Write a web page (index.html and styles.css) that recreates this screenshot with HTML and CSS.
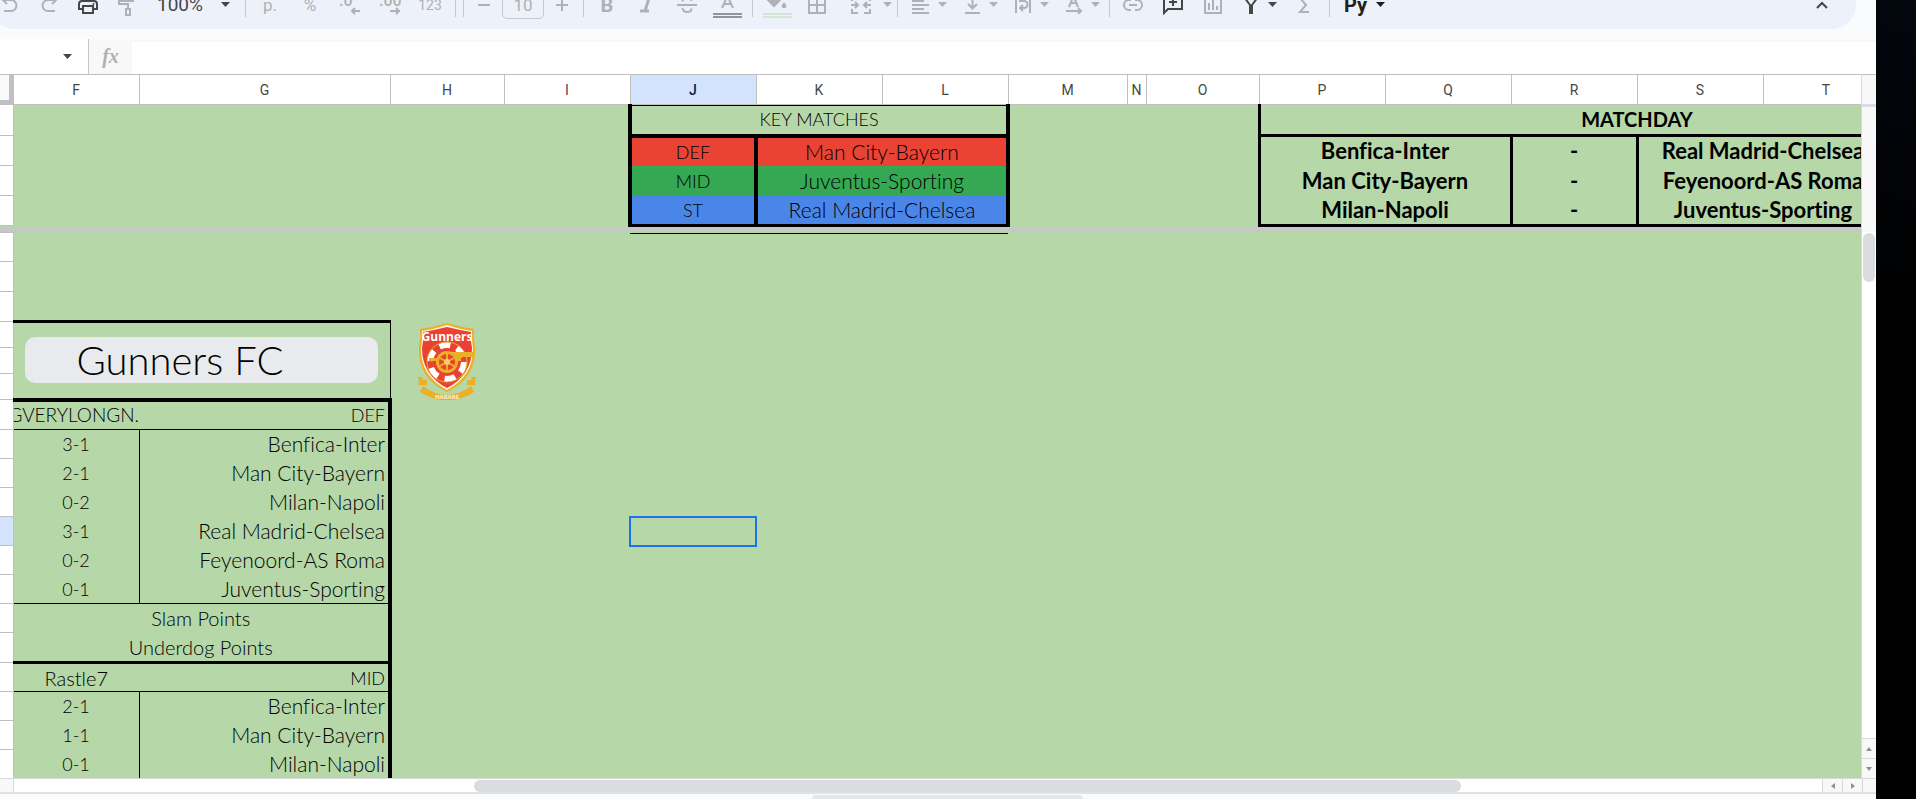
FILE: index.html
```html
<!DOCTYPE html>
<html lang="en">
<head>
  <meta charset="UTF-8">
  <title>Gunners FC</title>
  <link rel="stylesheet" href="styles.css">
</head>
<body>

<main class="app">
  <div class="toolbar">
    <button class="tool" aria-label="Undo"><svg width="20" height="20" viewBox="0 0 20 20"><path d="M7 1 3 5l4 4M3 5h8a5 5 0 0 1 0 11H4"/></svg></button>
    <button class="tool" aria-label="Redo"><svg width="20" height="20" viewBox="0 0 20 20"><path d="M13 1l4 4-4 4M17 5H9a5 5 0 0 0 0 11h7"/></svg></button>
    <button class="tool dark" aria-label="Print"><svg width="20" height="20" viewBox="0 0 20 20"><path d="M5 6V2h10v4M5 14H1V9a3 3 0 0 1 3-3h12a3 3 0 0 1 3 3v5h-4M5 11h10v7H5z"/><circle cx="15.500" cy="9" r="1" fill="currentColor" stroke="none"/></svg></button>
    <button class="tool" aria-label="Paint format"><svg width="20" height="24" viewBox="0 0 20 24"><path d="M4 3h12v5H4zM4 5H2v6h9v5M9 16h4v6H9zM16 5h2"/></svg></button>
    <label class="zoom"><select aria-label="Zoom"><option>100%</option></select><svg class="caret" width="9" height="5" viewBox="0 0 9 5"><path d="M0 0h9L4.500 5z"/></svg></label>
    <span class="divider"></span>
    <button class="tool wide">p.</button>
    <button class="tool wide">%</button>
    <button class="tool wide" aria-label="Decrease decimal places"><svg width="22" height="22" viewBox="0 0 22 22"><text x="0" y="12">.0</text><path d="M21 17h-8M16 14l-3 3 3 3"/></svg></button>
    <button class="tool wide" aria-label="Increase decimal places"><svg width="22" height="22" viewBox="0 0 22 22"><text x="0" y="12">.00</text><path d="M11 17h9M17 14l3 3-3 3"/></svg></button>
    <button class="tool wide formats">123</button>
    <span class="divider"></span>
    <span class="divider second"></span>
    <button class="tool step" aria-label="Decrease font size"><svg width="14" height="14" viewBox="0 0 14 14"><path d="M1 7h12"/></svg></button>
    <input class="font-size" type="text" value="10" aria-label="Font size">
    <button class="tool step" aria-label="Increase font size"><svg width="14" height="14" viewBox="0 0 14 14"><path d="M1 7h12M7 1v12"/></svg></button>
    <span class="divider third"></span>
    <button class="tool wide bold">B</button>
    <button class="tool wide" aria-label="Italic"><svg width="16" height="16" viewBox="0 0 16 16"><path d="M5 1h9M1 14h9M10 1 6 14" stroke-width="3"/></svg></button>
    <button class="tool wide" aria-label="Strikethrough"><svg width="20" height="18" viewBox="0 0 20 18"><path d="M0 9h20M14.500 5C14 3 12.500 2 10 2S5.500 3.500 5.500 5.500M5.500 12c.5 3 2.500 4 4.500 4s4.500-1 4.500-3.500"/></svg></button>
    <button class="tool wide" aria-label="Text color"><svg width="29" height="26" viewBox="0 0 29 26"><path d="M9 16 14.500 4 20 16M11 12h7" /><path d="M0 22h29M0 25h29" stroke="#8f959d"/></svg></button>
    <span class="divider"></span>
    <button class="tool wide" aria-label="Fill color"><svg width="29" height="26" viewBox="0 0 29 26"><path d="M5 8h12l-6 6z" fill="currentColor"/><path d="M21 10q5 6 0 6t0-6" fill="currentColor" stroke="none"/><path d="M0 22h29M0 25h29" stroke="#d4e6d6"/></svg></button>
    <button class="tool wide" aria-label="Borders"><svg width="18" height="18" viewBox="0 0 18 18"><path d="M1 1h16v16H1zM9 1v16M1 9h16"/></svg></button>
    <button class="tool drop spaced" aria-label="Merge cells"><svg width="20" height="18" viewBox="0 0 20 18"><path d="M1 5V1h6M13 1h6v4M1 13v4h6M13 17h6v-4M0 9h7M4 6l3 3-3 3M20 9h-7M16 6l-3 3 3 3"/></svg><svg class="caret" width="9" height="5" viewBox="0 0 9 5"><path d="M0 0h9L4.500 5z"/></svg></button>
    <span class="divider close"></span>
    <button class="tool drop" aria-label="Horizontal align"><svg width="20" height="18" viewBox="0 0 20 18"><path d="M1 1h17M1 5h12M1 9h17M1 13h12M1 17h17"/></svg><svg class="caret" width="9" height="5" viewBox="0 0 9 5"><path d="M0 0h9L4.500 5z"/></svg></button>
    <button class="tool drop" aria-label="Vertical align"><svg width="20" height="18" viewBox="0 0 20 18"><path d="M3 17h15M10.500 0v12M6 8l4.500 4.500L15 8"/></svg><svg class="caret" width="9" height="5" viewBox="0 0 9 5"><path d="M0 0h9L4.500 5z"/></svg></button>
    <button class="tool drop" aria-label="Text wrapping"><svg width="20" height="18" viewBox="0 0 20 18"><path d="M3 0v17M17 0v17M6 5h5a3.500 3.500 0 0 1 0 7H8M10 9l-3 3 3 3"/></svg><svg class="caret" width="9" height="5" viewBox="0 0 9 5"><path d="M0 0h9L4.500 5z"/></svg></button>
    <button class="tool drop" aria-label="Text rotation"><svg width="20" height="18" viewBox="0 0 20 18"><path d="M5 11 9.500 0 14 11M7 7h5M2 15h15M14 12l3 3-3 3"/></svg><svg class="caret" width="9" height="5" viewBox="0 0 9 5"><path d="M0 0h9L4.500 5z"/></svg></button>
    <span class="divider tight"></span>
    <button class="tool wide" aria-label="Insert link"><svg width="20" height="12" viewBox="0 0 20 12"><path d="M8 1H6a5 5 0 0 0 0 10h2M12 1h2a5 5 0 0 1 0 10h-2M6 6h8"/></svg></button>
    <button class="tool wide dark" aria-label="Insert comment"><svg width="20" height="20" viewBox="0 0 20 20"><path d="M1 18V0h18v14H5zM10 3v8M6 7h8"/></svg></button>
    <button class="tool wide" aria-label="Insert chart"><svg width="18" height="18" viewBox="0 0 18 18"><path d="M1 1h16v16H1zM5 7v7M9 4v10M13 10v4"/></svg></button>
    <button class="tool drop dark" aria-label="Filter"><svg width="20" height="18" viewBox="0 0 20 18"><path d="M3 1h14l-6 8v8H9V9z"/></svg><svg class="caret" width="9" height="5" viewBox="0 0 9 5"><path d="M0 0h9L4.500 5z"/></svg></button>
    <button class="tool wide" aria-label="Functions"><svg width="14" height="16" viewBox="0 0 14 16"><path d="M12 1H3l6 7-6 7h9"/></svg></button>
    <span class="divider"></span>
    <button class="tool drop spaced py"><b>Py</b><svg class="caret" width="9" height="5" viewBox="0 0 9 5"><path d="M0 0h9L4.500 5z"/></svg></button>
    <button class="tool dark collapse" aria-label="Hide the menus"><svg width="12" height="8" viewBox="0 0 12 8"><path d="M1 7l5-5 5 5"/></svg></button>
  </div>

  <div class="formula-bar">
    <button class="name-box" aria-label="Name box"><svg class="caret" width="9" height="5" viewBox="0 0 9 5"><path d="M0 0h9L4.500 5z"/></svg></button>
    <span class="fx">fx</span>
    <input class="formula" type="text" aria-label="Formula">
  </div>

  <div class="workspace">
    <div class="panes">
      <table class="cells frozen">
        <colgroup>
          <col class="c-num"><col class="c-std"><col class="c-g"><col class="c-h"><col class="c-std"><col class="c-std"><col class="c-std"><col class="c-std"><col class="c-m"><col class="c-n"><col class="c-o"><col class="c-std"><col class="c-std"><col class="c-std"><col class="c-std"><col class="c-std"><col class="c-std">
        </colgroup>
        <thead>
          <tr>
            <th class="corner"></th><th>F</th><th>G</th><th>H</th><th>I</th><th class="active">J</th><th>K</th><th>L</th><th>M</th><th>N</th><th>O</th><th>P</th><th>Q</th><th>R</th><th>S</th><th>T</th><th>U</th>
          </tr>
        </thead>
        <tbody>
          <tr class="r31">
            <th></th><td colspan="4"></td>
            <td class="key-title" colspan="3">KEY MATCHES</td>
            <td colspan="3"></td>
            <td class="day-title" colspan="6">MATCHDAY</td>
          </tr>
          <tr class="r30">
            <th></th><td colspan="4"></td>
            <td class="key def">DEF</td><td class="key def name" colspan="2">Man City-Bayern</td>
            <td colspan="3"></td>
            <td class="day" colspan="2">Benfica-Inter</td><td class="day">-</td><td class="day" colspan="2">Real Madrid-Chelsea</td><td class="day"></td>
          </tr>
          <tr class="r30">
            <th></th><td colspan="4"></td>
            <td class="key mid">MID</td><td class="key mid name" colspan="2">Juventus-Sporting</td>
            <td colspan="3"></td>
            <td class="day" colspan="2">Man City-Bayern</td><td class="day">-</td><td class="day" colspan="2">Feyenoord-AS Roma</td><td class="day"></td>
          </tr>
          <tr class="r30">
            <th></th><td colspan="4"></td>
            <td class="key st last">ST</td><td class="key st last name" colspan="2">Real Madrid-Chelsea</td>
            <td colspan="3"></td>
            <td class="day last" colspan="2">Milan-Napoli</td><td class="day last">-</td><td class="day last" colspan="2">Juventus-Sporting</td><td class="day last"></td>
          </tr>
        </tbody>
      </table>

      <div class="freeze"></div>

      <table class="cells">
        <colgroup>
          <col class="c-num"><col class="c-std"><col class="c-g"><col class="c-h"><col class="c-std"><col class="c-std"><col class="c-std"><col class="c-std"><col class="c-m"><col class="c-n"><col class="c-o"><col class="c-std"><col class="c-std"><col class="c-std"><col class="c-std"><col class="c-std"><col class="c-std">
        </colgroup>
        <tbody>
          <tr class="r29"><th></th><td colspan="4"></td><td class="key-edge" colspan="3"></td><td colspan="9"></td></tr>
          <tr class="r30"><th></th><td colspan="16"></td></tr>
          <tr class="r30"><th></th><td colspan="16"></td></tr>
          <tr class="r26">
            <th></th>
            <td class="team" colspan="2" rowspan="3"><button class="chip">Gunners FC</button></td>
            <td class="crest" rowspan="3">
              <svg width="60" height="78" viewBox="0 0 60 78">
                <path d="M3 7Q17 5 30 1q13 4 27 6-1 9 1 17 2 32-28 46Q0 56 2 24 4 16 3 7z" fill="#ecb028"/>
                <path d="M5 9q13-2 25-6 12 4 25 6-1 8 1 16 1 29-26 43Q3 54 4 25 6 17 5 9z" fill="#fff3d8"/>
                <path d="M6 10q12-2 24-5 12 3 24 5-1 8 1 16 0 27-25 40Q5 53 5 26 7 18 6 10z" fill="#e94235"/>
                <circle cx="30" cy="40" r="17" fill="none" stroke="#fff" stroke-width="6" stroke-dasharray="11 7"/>
                <circle cx="30" cy="40" r="20" fill="none" stroke="#ecb028"/>
                <path d="M30 30h28v5H44v4H30zM12 36h10v3H12z" fill="#ecb028"/>
                <circle cx="30" cy="40" r="11" fill="#ecb028"/>
                <circle cx="30" cy="40" r="8" fill="#e94235"/>
                <path d="M30 32v16M23 36l14 8M37 36l-14 8" stroke="#ecb028" stroke-width="2"/>
                <circle cx="30" cy="40" r="3" fill="#f6cf6a"/>
                <path d="M1 55h4l1 3h4v5H1l1-3zM59 55h-4l-1 3h-4v5h9l-1-3z" fill="#ecb028"/>
                <path d="M6 64q24 18 48 0l3 6q-27 17-54 0z" fill="#ecb028"/>
                <text class="crest-name" x="30" y="19">Gunners</text>
                <text class="crest-city" x="30" y="77">HARARE</text>
              </svg>
            </td>
            <td colspan="13"></td>
          </tr>
          <tr class="r26"><th></th><td colspan="13"></td></tr>
          <tr class="r26"><th></th><td colspan="13"></td></tr>
          <tr class="r30"><th></th><td class="player caps"><div class="cut">GVERYLONGN.</div></td><td class="slot">DEF</td><td colspan="14"></td></tr>
          <tr class="r29"><th></th><td class="score">3-1</td><td class="match">Benfica-Inter</td><td colspan="14"></td></tr>
          <tr class="r29"><th></th><td class="score">2-1</td><td class="match">Man City-Bayern</td><td colspan="14"></td></tr>
          <tr class="r29"><th></th><td class="score">0-2</td><td class="match">Milan-Napoli</td><td colspan="14"></td></tr>
          <tr class="r29"><th class="active"></th><td class="score">3-1</td><td class="match">Real Madrid-Chelsea</td><td colspan="2"></td><td class="selected"></td><td colspan="11"></td></tr>
          <tr class="r29"><th></th><td class="score">0-2</td><td class="match">Feyenoord-AS Roma</td><td colspan="14"></td></tr>
          <tr class="r29"><th></th><td class="score">0-1</td><td class="match">Juventus-Sporting</td><td colspan="14"></td></tr>
          <tr class="r29"><th></th><td class="points first" colspan="2">Slam Points</td><td colspan="14"></td></tr>
          <tr class="r30"><th></th><td class="points end" colspan="2">Underdog Points</td><td colspan="14"></td></tr>
          <tr class="r29"><th></th><td class="player">Rastle7</td><td class="slot">MID</td><td colspan="14"></td></tr>
          <tr class="r29"><th></th><td class="score">2-1</td><td class="match">Benfica-Inter</td><td colspan="14"></td></tr>
          <tr class="r29"><th></th><td class="score">1-1</td><td class="match">Man City-Bayern</td><td colspan="14"></td></tr>
          <tr class="r29"><th></th><td class="score">0-1</td><td class="match">Milan-Napoli</td><td colspan="14"></td></tr>
        </tbody>
      </table>
    </div>

    <div class="v-scroll">
      <div class="v-head"></div>
      <div class="v-frozen"></div>
      <div class="v-track"><div class="v-thumb"></div></div>
      <button aria-label="Scroll up"><svg width="6" height="4" viewBox="0 0 6 4"><path d="M0 4h6L3 0z"/></svg></button>
      <button aria-label="Scroll down"><svg width="6" height="4" viewBox="0 0 6 4"><path d="M0 0h6L3 4z"/></svg></button>
    </div>
  </div>

  <div class="h-scroll">
    <div class="h-start"></div>
    <div class="h-track"><div class="h-thumb"></div></div>
    <button aria-label="Scroll left"><svg width="4" height="6" viewBox="0 0 4 6"><path d="M4 0v6L0 3z"/></svg></button>
    <button aria-label="Scroll right"><svg width="4" height="6" viewBox="0 0 4 6"><path d="M0 0v6l4-3z"/></svg></button>
    <div class="h-end"></div>
  </div>

  <div class="tabs"><div class="tab"></div></div>
</main>

<div class="edge"></div>

</body>
</html>
```
FILE: styles.css
```css
* {
  box-sizing: border-box;
}
body {
  margin: 0;
  height: 100vh;
  display: flex;
  overflow: hidden;
  background: #000;
  font-family: Lato, sans-serif;
  color: #000;
}
button, input, select {
  font: inherit;
  color: inherit;
  border: none;
  background: none;
  padding: 0;
  margin: 0;
}
.app {
  flex: 1;
  min-width: 0;
  display: flex;
  flex-direction: column;
  background: #f9fbfd;
}
.edge {
  width: 40px;
  background: linear-gradient(200deg, #03070e, #000 40%);
}

/* toolbar */
.toolbar {
  display: flex;
  align-items: center;
  flex-shrink: 0;
  height: 49px;
  margin: -20px 20px 10px -10px;
  background: #edf1fa;
  border-radius: 24px;
  color: #aeb1b6;
  font-family: Roboto, sans-serif;
  font-size: 17px;
}
.toolbar svg {
  flex-shrink: 0;
  fill: none;
  stroke: currentColor;
  stroke-width: 2;
}
.toolbar svg text {
  fill: currentColor;
  stroke: none;
  font-size: 16px;
  font-weight: 500;
}
.tool {
  display: flex;
  align-items: center;
  justify-content: center;
  flex-shrink: 0;
  width: 39px;
  height: 40px;
}
.tool.wide { width: 40px; }
.tool.step { width: 36px; }
.tool.drop {
  width: 51px;
  justify-content: flex-start;
  gap: 7px;
  padding-left: 8px;
}
.tool.drop.spaced {
  width: 55px;
  gap: 12px;
  padding-left: 14px;
}
.tool.drop.py {
  padding-left: 10px;
  gap: 9px;
  color: #1f1f1f;
  font-size: 20px;
}
.dark { color: #444746; }
.formats { font-size: 14px; }
.bold {
  font-size: 20px;
  font-weight: 700;
}
.toolbar svg.caret, .caret {
  fill: currentColor;
  stroke: none;
}
.zoom {
  display: flex;
  align-items: center;
  width: 94px;
  padding-left: 11px;
  gap: 18px;
  color: #444746;
  font-size: 19px;
}
.zoom select {
  appearance: none;
  width: 46px;
}
.divider {
  flex-shrink: 0;
  width: 1px;
  height: 24px;
  margin: 0 4px 0 5px;
  background: #c7c9cc;
}
.divider.second { margin: 0 2px 0 3px; }
.divider.third { margin: 0 3px; }
.divider.close { margin: 0 5px; }
.divider.tight { margin: 0 3px 0 2px; }
.font-size {
  width: 42px;
  height: 29px;
  border: 1px solid #c7c9cc;
  border-radius: 5px;
  text-align: center;
}
.collapse {
  margin-left: auto;
  margin-right: 15px;
}

/* formula bar */
.formula-bar {
  display: flex;
  flex-shrink: 0;
  height: 35px;
  background: #fff;
}
.name-box {
  display: flex;
  align-items: center;
  justify-content: flex-end;
  width: 89px;
  padding-right: 16px;
  border-right: 1px solid #c7c7c7;
  color: #444746;
}
.fx {
  width: 43px;
  background: #f8f8f8;
  color: #aeb1b6;
  font: italic bold 20px/34px "Liberation Serif", serif;
  text-align: center;
}
.formula {
  flex: 1;
  border-top: 3px solid #f8f8f8;
}

/* spreadsheet */
.workspace {
  flex: 1;
  min-height: 0;
  display: flex;
}
.panes {
  flex: 1;
  min-width: 0;
  overflow: hidden;
  background: #b6d7a8;
}
.cells {
  width: 2015px;
  table-layout: fixed;
  border-collapse: collapse;
  font-size: 18px;
  line-height: 22px;
  font-weight: 300;
  font-variant-ligatures: none;
}
.c-num { width: 13px; }
.c-std { width: 126px; }
.c-g { width: 251px; }
.c-h { width: 114px; }
.c-m { width: 119px; }
.c-n { width: 19px; }
.c-o { width: 113px; }
.r26 { height: 26px; }
.r29 { height: 29px; }
.r30 { height: 30px; }
.r31 { height: 31px; }
th, td {
  padding: 0;
  text-align: center;
  white-space: nowrap;
}
th {
  background: #fff;
  border: 1px solid #c0c0c0;
  border-left: none;
}
thead th {
  height: 30px;
  font: 14px Roboto, sans-serif;
  color: #444746;
}
th.active {
  background: #d3e3fd;
  color: #041e49;
}
thead th.active { font-weight: 500; }
thead .corner {
  background: #f8f9fa;
  box-shadow: inset -4px -4px #c0c0c0;
}
.freeze {
  height: 5px;
  background: #c7c7c7;
}

.key-title {
  border: 4px solid #000;
  border-top: none;
  box-shadow: inset 0 1px #000;
}
.key {
  border-left: 4px solid #000;
  border-right: 4px solid #000;
}
.name, .match { font-size: 21px; }
.key.last { border-bottom: 3px solid #000; }
.key-edge { box-shadow: inset 0 1px #000; }
.def { background: #ea4335; }
.mid { background: #34a853; }
.st { background: #4a86e8; }
.day-title, .day {
  border-left: 3px solid #000;
  border-right: 3px solid #000;
  font-size: 22px;
  font-weight: 700;
}
.day-title {
  padding-bottom: 2px;
  font-size: 20px;
}
.day-title, .day.last { border-bottom: 3px solid #000; }

.team {
  border-top: 3px solid #000;
  border-right: 1px solid #000;
  border-bottom: 4px solid #000;
  padding: 0 12px 0 11px;
}
.chip {
  display: block;
  width: 100%;
  height: 46px;
  padding-right: 42px;
  border-radius: 10px;
  background: #e8eaed;
  font-size: 40px;
  line-height: 46px;
}
.crest svg { display: block; margin: 0 auto; }
.crest-name {
  font: bold 12px "Open Sans", sans-serif;
  fill: #fff;
  text-anchor: middle;
}
.crest-city {
  font: bold 6px "Open Sans", sans-serif;
  fill: #fff3d8;
  text-anchor: middle;
}
.player, .slot { border-bottom: 1px solid #000; }
.player, .points { font-size: 20px; }
.player.caps { font-size: 19px; }
.cut {
  display: flex;
  justify-content: flex-end;
  overflow: hidden;
}
.slot, .match {
  border-right: 4px solid #000;
  padding-right: 3px;
  text-align: right;
}
.score { border-right: 1px solid #000; }
.points { border-right: 4px solid #000; }
.points.first { border-top: 1px solid #000; }
.points.end { border-bottom: 3px solid #000; }
.selected {
  outline: 2px solid #1a73e8;
  outline-offset: -1px;
}

/* scrollbars */
.v-scroll {
  display: flex;
  flex-direction: column;
  width: 15px;
  border-left: 1px solid #d9d9d9;
  background: #fff;
}
.v-head {
  height: 33px;
  background: #f8f8f8;
  border-top: 1px solid #c0c0c0;
  border-bottom: 3px solid #dadce0;
}
.v-frozen {
  height: 125px;
  background: #f8f8f8;
}
.v-track {
  flex: 1;
  padding: 1px;
}
.v-thumb {
  height: 49px;
  border-radius: 6px;
  background: #dadce0;
}
.v-scroll button, .h-scroll button {
  display: flex;
  align-items: center;
  justify-content: center;
  height: 20px;
  background: #f8f8f8;
  border-top: 1px solid #d9d9d9;
}
.v-scroll svg, .h-scroll svg { fill: #8f8f8f; }
.h-scroll {
  display: flex;
  flex-shrink: 0;
  height: 14px;
  background: #fff;
  border-top: 1px solid #d9d9d9;
}
.h-start {
  width: 14px;
  background: #f8f8f8;
  border-right: 1px solid #d9d9d9;
}
.h-track {
  flex: 1;
  padding: 1px 0 0;
}
.h-thumb {
  width: 987px;
  height: 12px;
  margin-left: 460px;
  border-radius: 6px;
  background: #dadce0;
}
.h-scroll button {
  width: 20px;
  height: 13px;
  border-top: none;
  border-left: 1px solid #d9d9d9;
}
.h-end {
  width: 14px;
  background: #f8f8f8;
  border-left: 1px solid #d9d9d9;
}
.tabs {
  flex-shrink: 0;
  height: 7px;
  padding: 1px 0 0 18px;
  border-top: 2px solid #e1e3e1;
}
.tab {
  width: 271px;
  height: 4px;
  margin: 0 auto;
  background: #e4e7ee;
  border-radius: 4px 4px 0 0;
}
```
